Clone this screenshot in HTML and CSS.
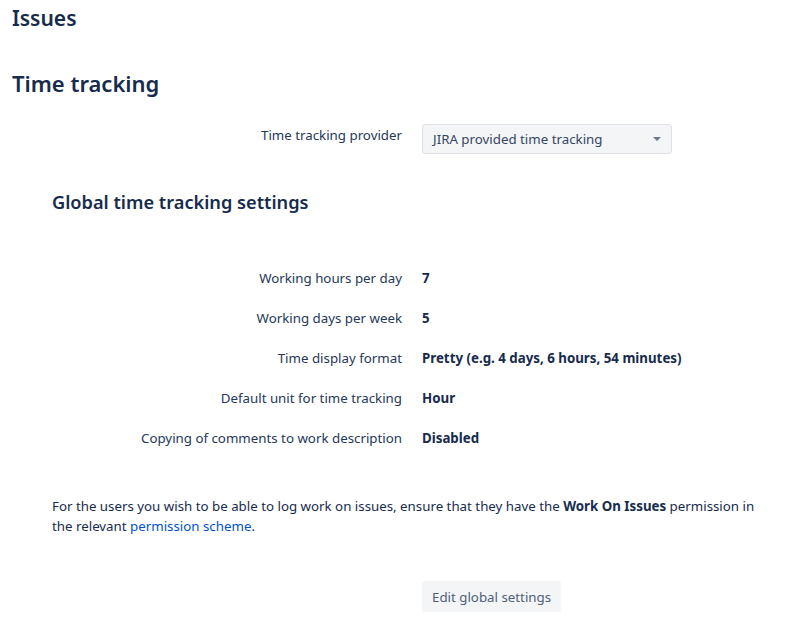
FILE: index.html
```html
<!DOCTYPE html>
<html lang="en">
<head>
    <meta charset="UTF-8">
    <title>Time tracking</title>
    <link rel="stylesheet" href="styles.css">
</head>
<body>
    <div class="pagina">
        <h1 class="titulo">Issues</h1>
        <h2 class="secao">Time tracking</h2>

        <div class="linha linha-provedor">
            <div class="rotulo">Time tracking provider</div>
            <div class="seletor">
                <span>JIRA provided time tracking</span>
                <span class="seta"></span>
            </div>
        </div>

        <h3 class="subtitulo">Global time tracking settings</h3>

        <div class="config">
            <div class="linha">
                <div class="rotulo">Working hours per day</div>
                <div class="valor">7</div>
            </div>
            <div class="linha">
                <div class="rotulo">Working days per week</div>
                <div class="valor">5</div>
            </div>
            <div class="linha">
                <div class="rotulo">Time display format</div>
                <div class="valor">Pretty (e.g. 4 days, 6 hours, 54 minutes)</div>
            </div>
            <div class="linha">
                <div class="rotulo">Default unit for time tracking</div>
                <div class="valor">Hour</div>
            </div>
            <div class="linha">
                <div class="rotulo">Copying of comments to work description</div>
                <div class="valor">Disabled</div>
            </div>
        </div>

        <p class="aviso">For the users you wish to be able to log work on issues, ensure that they have the <strong>Work On Issues</strong> permission in the relevant <a href="#">permission scheme</a>.</p>

        <div class="linha linha-botao">
            <div class="rotulo"></div>
            <button class="botao">Edit global settings</button>
        </div>
    </div>
</body>
</html>
```

FILE: styles.css
```css
body {
    font-family: "Noto Sans", "Open Sans", sans-serif;
    margin: 0;
    padding: 0;
    background-color: #fff;
    color: #172b4d;
    font-size: 13.3px;
}
.pagina {
    padding: 0 12px;
}
.titulo {
    font-size: 21px;
    font-weight: 600;
    margin: 0;
    padding-top: 3px;
    line-height: 30px;
}
.secao {
    font-size: 22px;
    font-weight: 600;
    margin: 35px 0 0;
    line-height: 30px;
}
.linha {
    display: flex;
    align-items: flex-start;
    line-height: 20px;
    height: 40px;
}
.linha-provedor {
    margin-top: 26px;
}
.rotulo {
    width: 390px;
    text-align: right;
    padding-right: 20px;
    color: #253858;
    flex-shrink: 0;
    padding-top: 1px;
}
.valor {
    font-weight: bold;
    padding-top: 1px;
}
.seletor {
    height: 28px;
    border: 1px solid #dfe1e6;
    border-radius: 3px;
    background-color: #f4f5f7;
    display: flex;
    align-items: center;
    justify-content: space-between;
    padding: 0 10px;
    width: 228px;
    color: #344563;
}
.seta {
    width: 0;
    height: 0;
    border-left: 4px solid transparent;
    border-right: 4px solid transparent;
    border-top: 4px solid #6b778c;
}
.subtitulo {
    font-size: 18.2px;
    font-weight: 600;
    margin: 25px 0 0 40px;
    line-height: 26px;
}
.config {
    margin-top: 52px;
}
.aviso {
    margin: 29px 0 0 40px;
    line-height: 20px;
    max-width: 705px;
}
.aviso strong,
.aviso a {
    line-height: 20px;
}
.aviso a {
    color: #0052cc;
    text-decoration: none;
}
.linha-botao {
    margin-top: 51px;
}
.botao {
    font-family: inherit;
    font-size: 13.3px;
    background-color: #f4f5f7;
    color: #505f79;
    border: none;
    border-radius: 3px;
    padding: 0 10px;
    height: 31px;
    margin-top: -6px;
    cursor: pointer;
}
```
